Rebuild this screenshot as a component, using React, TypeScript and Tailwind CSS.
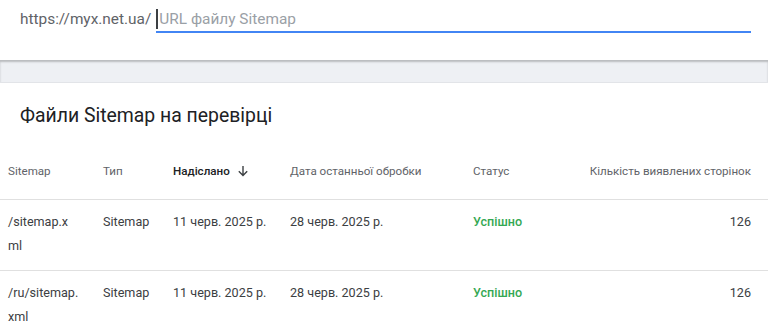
import React from "react";

const rows = [
  { path: ["/sitemap.x", "ml"], type: "Sitemap", sent: "11 черв. 2025 р.", last: "28 черв. 2025 р.", status: "Успішно", count: "126" },
  { path: ["/ru/sitemap.", "xml"], type: "Sitemap", sent: "11 черв. 2025 р.", last: "28 черв. 2025 р.", status: "Успішно", count: "126" },
];

const grid = "grid grid-cols-[95px_70px_117px_183px_1fr_auto] pl-[8px] pr-[17px]";

export default function App() {
  return (
    <div className="w-[768px] h-[333px] overflow-hidden bg-white" style={{ fontFamily: "Roboto, 'Noto Sans', sans-serif" }}>
      <div className="h-[60px] bg-white flex items-start pl-[20px] pr-[17px] pt-[8px]">
        <span className="text-[15.4px] leading-[22px] text-[#5f6368] whitespace-nowrap">https://myx.net.ua/</span>
        <div className="ml-[5px] flex-1 h-[25px] border-b-2 border-[#4285f4] flex items-start">
          <span className="w-[2px] h-[20px] mt-[1px] bg-[#3c4043]"></span>
          <span className="text-[15.4px] leading-[22px] text-[#9aa0a6] ml-[1px]">URL файлу Sitemap</span>
        </div>
      </div>
      <div className="h-[23px] bg-[#eef0f4] shadow-[inset_0_2px_2px_rgba(0,0,0,0.22)] border-b border-[#e2e4e8]"></div>
      <div className="bg-white">
        <div className="pl-[20px] pt-[19px] h-[61px] text-[19.4px] leading-[28px] text-[#202124]">Файли Sitemap на перевірці</div>
        <div className={`${grid} h-[56px] items-center border-b border-[#e0e0e0] text-[11.6px] text-[#5f6368]`}>
          <div>Sitemap</div>
          <div>Тип</div>
          <div className="flex items-center text-[#202124] font-medium">
            Надіслано
            <svg className="ml-[7px]" width="12" height="12" viewBox="0 0 12 12" fill="none" stroke="#3c4043" strokeWidth="1.4">
              <path d="M6 1v9.5M1.8 6.3 6 10.5l4.2-4.2" />
            </svg>
          </div>
          <div>Дата останньої обробки</div>
          <div>Статус</div>
          <div className="text-right">Кількість виявлених сторінок</div>
        </div>
        {rows.map((r, i) => (
          <div key={i} className={`${grid} pt-[10px] pb-[12px] border-b border-[#e0e0e0] text-[12.6px] leading-[24px] text-[#3c4043]`}>
            <div className="flex flex-col">
              <span>{r.path[0]}</span>
              <span>{r.path[1]}</span>
            </div>
            <div>{r.type}</div>
            <div>{r.sent}</div>
            <div>{r.last}</div>
            <div className="text-[#34a853] font-medium">{r.status}</div>
            <div className="text-right">{r.count}</div>
          </div>
        ))}
      </div>
    </div>
  );
}
